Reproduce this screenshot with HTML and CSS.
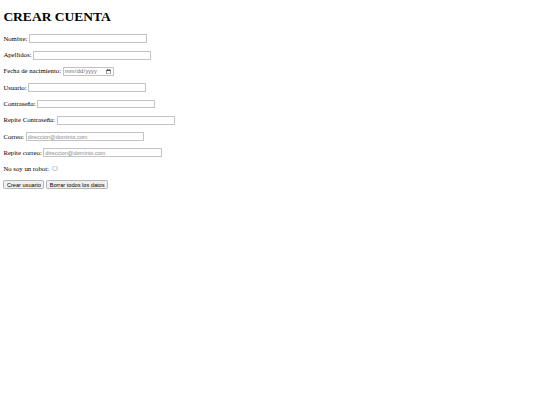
FILE: index.html
```html
<!DOCTYPE html>
<html lang="es">
<head>
<meta charset="utf-8">
<title>Crear cuenta</title>
<link rel="stylesheet" href="styles.css">
</head>
<body class="page">
<h1 class="title">CREAR CUENTA</h1>
<form class="form">
  <p class="row"><label class="label">Nombre: <input class="field" type="text"></label></p>
  <p class="row"><label class="label">Apellidos: <input class="field" type="text"></label></p>
  <p class="row"><label class="label">Fecha de nacimiento: <input class="field date" type="date"></label></p>
  <p class="row"><label class="label">Usuario: <input class="field" type="text"></label></p>
  <p class="row"><label class="label">Contraseña: <input class="field" type="password"></label></p>
  <p class="row"><label class="label">Repite Contraseña: <input class="field" type="password"></label></p>
  <p class="row"><label class="label">Correo: <input class="field" type="email" placeholder="direccion@dominio.com"></label></p>
  <p class="row"><label class="label">Repite correo: <input class="field" type="email" placeholder="direccion@dominio.com"></label></p>
  <p class="row"><label class="label">No soy un robot: <input class="check" type="checkbox"></label></p>
  <p class="row"><button class="btn" type="submit">Crear usuario</button> <button class="btn" type="reset">Borrar todos los datos</button></p>
</form>
</body>
</html>
```

FILE: styles.css
```css
html {
  zoom: 0.421875;
  background: #ffffff;
}
.page {
  margin: 8px;
  font-family: "Liberation Serif", "Times New Roman", serif;
  font-size: 16px;
  color: #000000;
}
.title {
  font-size: 32px;
  font-weight: bold;
  margin: 14.4px 0 21.44px;
}
.form {
  margin: 0;
}
.row {
  margin: 17.6px 0;
}
.field {
  box-sizing: border-box;
  width: 280px;
  height: 21px;
  padding: 1px 2px;
  border: 2px solid #c2c2c2;
  border-radius: 2px;
  background: #ffffff;
  font-family: "Liberation Sans", Arial, sans-serif;
  font-size: 13.333px;
}
.field::placeholder {
  color: #8a8a8a;
}
.date {
  width: 121px;
  color: #666666;
}
.btn {
  height: 21px;
  padding: 1px 6px;
  border: 2px solid #b4b4b4;
  border-radius: 3px;
  background: #efefef;
  color: #000000;
  font-family: "Liberation Sans", Arial, sans-serif;
  font-size: 13.333px;
}
```
